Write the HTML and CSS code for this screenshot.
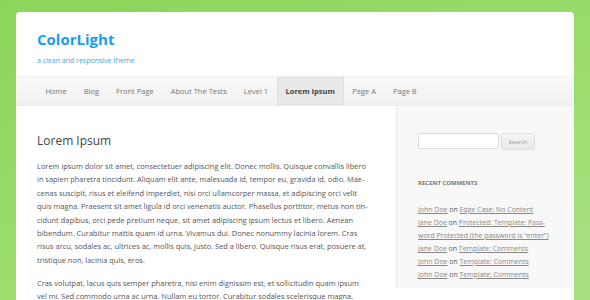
FILE: index.html
```html
<!DOCTYPE html>
<html lang="en">
<head>
  <meta charset="UTF-8">
  <title>ColorLight</title>
  <link rel="stylesheet" href="styles.css">
</head>
<body>
  <div class="page">
    <header class="site-header">
      <h1 class="site-title">ColorLight</h1>
      <p class="site-desc">a clean and responsive theme</p>
    </header>

    <nav class="menu">
      <a href="#">Home</a>
      <a href="#">Blog</a>
      <a href="#">Front Page</a>
      <a href="#">About The Tests</a>
      <a href="#">Level 1</a>
      <a href="#" class="current">Lorem Ipsum</a>
      <a href="#">Page A</a>
      <a href="#">Page B</a>
    </nav>

    <div class="main">
      <article class="content">
        <h2 class="entry-title">Lorem Ipsum</h2>
        <p>Lorem ipsum dolor sit amet, consectetuer adipiscing elit. Donec mollis. Quisque convallis libero<br>
        in sapien pharetra tincidunt. Aliquam elit ante, malesuada id, tempor eu, gravida id, odio. Mae-<br>
        cenas suscipit, risus et eleifend imperdiet, nisi orci ullamcorper massa, et adipiscing orci velit<br>
        quis magna. Praesent sit amet ligula id orci venenatis auctor. Phasellus porttitor, metus non tin-<br>
        cidunt dapibus, orci pede pretium neque, sit amet adipiscing ipsum lectus et libero. Aenean<br>
        bibendum. Curabitur mattis quam id urna. Vivamus dui. Donec nonummy lacinia lorem. Cras<br>
        risus arcu, sodales ac, ultrices ac, mollis quis, justo. Sed a libero. Quisque risus erat, posuere at,<br>
        tristique non, lacinia quis, eros.</p>
        <p>Cras volutpat, lacus quis semper pharetra, nisi enim dignissim est, et sollicitudin quam ipsum<br>
        vel mi. Sed commodo urna ac urna. Nullam eu tortor. Curabitur sodales scelerisque magna.<br>
        Donec ultricies tristique pede.</p>
      </article>

      <aside class="sidebar">
        <form class="search">
          <input type="text" class="search-field">
          <button type="button" class="search-btn">Search</button>
        </form>

        <h3 class="widget-title">Recent Comments</h3>
        <ul class="comments">
          <li><a href="#">John Doe</a> on <a href="#">Edge Case: No Content</a></li>
          <li><a href="#">Jane Doe</a> on <a href="#">Protected: Template: Pass&shy;word Protected (the password is “enter”)</a></li>
          <li><a href="#">Jane Doe</a> on <a href="#">Template: Comments</a></li>
          <li><a href="#">John Doe</a> on <a href="#">Template: Comments</a></li>
          <li><a href="#">John Doe</a> on <a href="#">Template: Comments</a></li>
        </ul>
      </aside>
    </div>
  </div>
</body>
</html>
```
FILE: styles.css
```css
* {
  box-sizing: border-box;
}

body {
  margin: 0;
  padding: 12px 16px 0 16px;
  height: 300px;
  overflow: hidden;
  background: linear-gradient(160deg, #8dd55a 0%, #9bdc6c 50%, #a8e183 100%);
  font-family: 'Open Sans', sans-serif;
  color: #555;
}

.page {
  background: #fff;
  border-radius: 4px 4px 0 0;
  width: 558px;
  height: 288px;
  overflow: hidden;
}

.site-header {
  padding: 18px 21px 0 21px;
  height: 64px;
}

.site-title {
  margin: 0;
  font-size: 15px;
  line-height: 18px;
  font-weight: 700;
  color: #1a9cf2;
}

.site-desc {
  margin: 8px 0 0 0;
  font-size: 7px;
  line-height: 10px;
  color: #38a8f0;
}

.menu {
  display: flex;
  height: 30px;
  padding-left: 21px;
  background: linear-gradient(to bottom, #f9f9f9, #f1f1f1);
  border-top: 1px solid #f0f0f0;
  border-bottom: 1px solid #ececec;
}

.menu a {
  display: flex;
  align-items: center;
  padding: 0 8.5px;
  font-size: 7.5px;
  color: #777;
  text-decoration: none;
}

.menu a.current {
  background: #e9e9e9;
  color: #444;
  font-weight: 700;
  padding: 0 9px;
  box-shadow: inset 0 0 3px rgba(0,0,0,0.08);
}

.main {
  display: flex;
  height: 182px;
}

.content {
  width: 380px;
  padding: 26px 0 0 21px;
}

.entry-title {
  margin: 0 0 10px 0;
  font-size: 12px;
  line-height: 18px;
  font-weight: 400;
  color: #444;
}

.content p {
  margin: 0 0 9.6px 0;
  font-size: 7.45px;
  line-height: 13.4px;
  white-space: nowrap;
  color: #555;
}

.sidebar {
  flex: 1;
  background: #f8f8f8;
  border-left: 1px solid #e8e8e8;
  padding: 27px 21px 0 21px;
}

.search {
  display: flex;
  gap: 2px;
  margin: 0;
}

.search-field {
  width: 81px;
  height: 16px;
  margin: 0;
  border: 1px solid #dcdcdc;
  border-radius: 2px;
  background: #fff;
}

.search-btn {
  width: 34px;
  height: 17px;
  margin: 0;
  padding: 0;
  border: 1px solid #dedede;
  border-radius: 2px;
  background: linear-gradient(to bottom, #f6f6f6, #e9e9e9);
  font-family: 'Open Sans', sans-serif;
  font-size: 6px;
  color: #999;
}

.widget-title {
  margin: 28px 0 15px 0;
  font-size: 6px;
  line-height: 10px;
  font-weight: 700;
  text-transform: uppercase;
  color: #777;
}

.comments {
  list-style: none;
  margin: 0;
  padding: 0;
  font-size: 6.95px;
  line-height: 13px;
  color: #555;
  width: 134px;
}

.comments a {
  color: #888;
}
```
